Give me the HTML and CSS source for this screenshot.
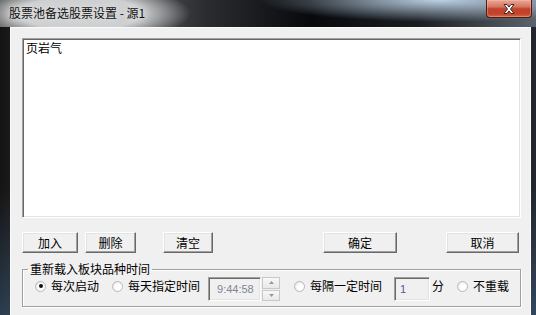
FILE: index.html
```html
<!DOCTYPE html>
<html lang="zh-CN">
<head>
    <meta charset="UTF-8">
    <title>股票池备选股票设置 - 源1</title>
    <link rel="stylesheet" href="styles.css">
</head>
<body>

<div class="window">
    <!-- 标题栏 -->
    <div class="titlebar">
        <span class="title">股票池备选股票设置 - 源1</span>
        <button class="close-btn" title="关闭">
            <svg width="16" height="12" viewBox="0 0 16 12">
                <path d="M3 1.5h3l2 2.6 2-2.6h3l-3.5 4.5 3.5 4.5h-3l-2-2.6-2 2.6h-3l3.5-4.5z" fill="#fff" stroke="#3a2a28" stroke-width="1" stroke-linejoin="round"/>
            </svg>
        </button>
    </div>

    <div class="frame">
        <div class="client">
            <!-- 股票列表 -->
            <div class="list-box">页岩气</div>

            <!-- 按钮 -->
            <div class="btn-row">
                <button class="btn btn-add">加入</button>
                <button class="btn btn-del">删除</button>
                <button class="btn btn-clear">清空</button>
                <button class="btn btn-ok">确定</button>
                <button class="btn btn-cancel">取消</button>
            </div>

            <!-- 重新载入时间 -->
            <fieldset class="reload-group">
                <legend>重新载入板块品种时间</legend>
                <div class="reload-row">
                    <label class="radio r-start"><span class="radio-circle checked"></span>每次启动</label>
                    <label class="radio r-daily"><span class="radio-circle"></span>每天指定时间</label>
                    <div class="edit edit-time">9:44:58</div>
                    <div class="spin">
                        <span class="spin-btn">
                            <svg width="5" height="3" viewBox="0 0 5 3"><path d="M0 3h5L2.5 0z" fill="#9a9a9a"/></svg>
                        </span>
                        <span class="spin-btn">
                            <svg width="5" height="3" viewBox="0 0 5 3"><path d="M0 0h5L2.5 3z" fill="#9a9a9a"/></svg>
                        </span>
                    </div>
                    <label class="radio r-every"><span class="radio-circle"></span>每隔一定时间</label>
                    <div class="edit edit-min">1</div>
                    <span class="unit">分</span>
                    <label class="radio r-never"><span class="radio-circle"></span>不重载</label>
                </div>
            </fieldset>
        </div>
    </div>
</div>

</body>
</html>
```

FILE: styles.css
```css
body {
    margin: 0;
    width: 536px;
    height: 315px;
    overflow: hidden;
    font-family: "Noto Sans CJK SC", "Liberation Sans", sans-serif;
    font-size: 12px;
    color: #000;
}
.window {
    width: 536px;
    height: 315px;
    display: flex;
    flex-direction: column;
    background:
        linear-gradient(to bottom, rgba(20, 20, 24, 0) 60%, rgba(70, 110, 150, 0.45) 100%),
        linear-gradient(to right, #141414 0, #1c1a1a 10px, #0d0f12 60%, #23272d 100%);
}
.titlebar {
    height: 27px;
    display: flex;
    align-items: flex-start;
    padding-right: 4px;
    background:
        radial-gradient(ellipse 180px 22px at 82% 0, rgba(196, 218, 238, 0.95), rgba(196, 218, 238, 0) 100%),
        radial-gradient(ellipse 110px 30px at 15% 50%, rgba(205, 207, 209, 1) 55%, rgba(205, 207, 209, 0) 100%),
        linear-gradient(to right, #3c3d3f 0, #6d6f72 18%, #2b2d31 38%, #07090c 58%, #1a1d22 78%, #5b636c 100%);
}
.title {
    margin: 5px 0 0 9px;
    font-size: 12px;
    line-height: 16px;
    color: #111;
    text-shadow: 0 0 6px #e4e4e4, 0 0 10px #e4e4e4;
}
.close-btn {
    margin-left: auto;
    width: 46px;
    height: 18px;
    padding: 0;
    border: 1px solid #4b1d16;
    border-top: none;
    border-radius: 0 0 4px 4px;
    background: linear-gradient(to bottom, #e9a897 0, #d67560 40%, #c2412b 52%, #c1442c 80%, #d9653f 100%);
    box-shadow: inset 0 0 0 1px rgba(255, 200, 180, 0.35);
    display: flex;
    align-items: center;
    justify-content: center;
}
.frame {
    flex: 1;
    display: flex;
    padding: 0 6px 0 10px;
}
.client {
    flex: 1;
    background-color: #f0f0f0;
    border: 1px solid #fbfbfb;
    border-bottom: none;
    padding: 10px 9px 0 11px;
}
.list-box {
    height: 180px;
    box-sizing: border-box;
    background-color: #fff;
    border: 1px solid;
    border-color: #a0a0a0 #fff #fff #a0a0a0;
    box-shadow: inset 1px 1px #696969, inset -1px -1px #e3e3e3;
    padding: 2px 3px;
    line-height: 14px;
}
.btn-row {
    display: flex;
    margin-top: 14px;
}
.btn {
    height: 21px;
    padding: 0;
    font-family: inherit;
    font-size: 12px;
    line-height: 14px;
    background-color: #f0f0f0;
    border: 1px solid;
    border-color: #fff #696969 #696969 #fff;
    box-shadow: inset -1px -1px #a0a0a0, inset 1px 1px #e3e3e3;
    color: #000;
}
.btn-add { width: 56px; }
.btn-del { width: 51px; margin-left: 7px; }
.btn-clear { width: 50px; margin-left: 27px; }
.btn-ok { width: 74px; margin-left: 110px; }
.btn-cancel { width: 73px; margin-left: 49px; }
.reload-group {
    width: 499px;
    box-sizing: border-box;
    margin: 9px 0 0;
    padding: 0 0 5px 5px;
    border: 1px solid #a0a0a0;
    box-shadow: inset 1px 1px #fff, 1px 1px #fff;
}
.reload-group legend {
    padding: 0 2px;
    line-height: 14px;
}
.reload-row {
    display: flex;
    align-items: flex-start;
    height: 24px;
    margin-top: 1px;
}
.radio {
    display: flex;
    align-items: center;
    gap: 5px;
    line-height: 14px;
    margin-top: 2px;
}
.radio-circle {
    width: 11px;
    height: 11px;
    box-sizing: border-box;
    border-radius: 50%;
    border: 1px solid #b9b9b9;
    background: radial-gradient(circle at 60% 60%, #fff 35%, #dcdcdc 100%);
    display: flex;
    align-items: center;
    justify-content: center;
}
.radio-circle.checked::after {
    content: "";
    width: 4px;
    height: 4px;
    border-radius: 50%;
    background-color: #111;
}
.r-start { margin-left: 7px; }
.r-daily { margin-left: 13px; }
.r-every { margin-left: 14px; }
.r-never { margin-left: 13px; }
.edit {
    height: 24px;
    box-sizing: border-box;
    background-color: #f0f0f0;
    border: 1px solid;
    border-color: #a0a0a0 #fff #fff #a0a0a0;
    box-shadow: inset 1px 1px #696969, inset -1px -1px #e3e3e3;
    font-family: "Liberation Sans", sans-serif;
    font-size: 11px;
    line-height: 22px;
    color: #7d8597;
}
.edit-time {
    width: 53px;
    margin-left: 8px;
    padding-left: 8px;
}
.edit-min {
    width: 36px;
    margin-left: 12px;
    padding-left: 5px;
    color: #4a58a8;
}
.spin {
    width: 18px;
    height: 24px;
    margin-left: 1px;
    display: flex;
    flex-direction: column;
    gap: 1px;
}
.spin-btn {
    flex: 1;
    box-sizing: border-box;
    border: 1px solid #c8c8c8;
    background: linear-gradient(to bottom, #f8f8f8, #e8e8e8);
    display: flex;
    align-items: center;
    justify-content: center;
}
.unit {
    margin: 2px 0 0 2px;
    line-height: 14px;
}
```
